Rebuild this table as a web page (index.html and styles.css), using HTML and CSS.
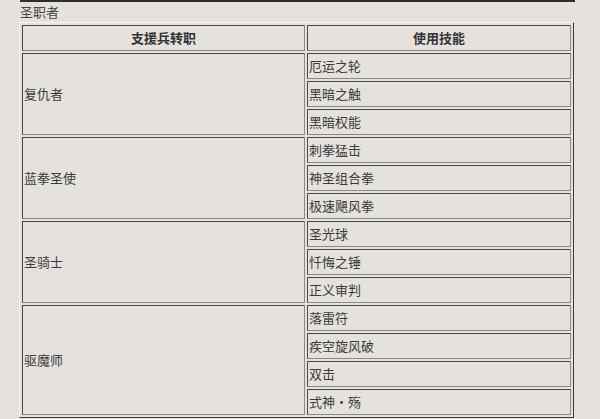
FILE: index.html
```html
<!DOCTYPE html>
<html lang="zh">
<head>
<meta charset="utf-8">
<link rel="stylesheet" href="styles.css">
</head>
<body>
<div class="page">
  <div class="topline"></div>
  <div class="title">圣职者</div>
  <table class="grid">
    <tr class="head"><th class="c1">支援兵转职</th><th class="c2">使用技能</th></tr>
    <tr><td rowspan="3">复仇者</td><td>厄运之轮</td></tr>
    <tr><td>黑暗之触</td></tr>
    <tr><td>黑暗权能</td></tr>
    <tr><td rowspan="3">蓝拳圣使</td><td>刺拳猛击</td></tr>
    <tr><td>神圣组合拳</td></tr>
    <tr><td>极速飓风拳</td></tr>
    <tr><td rowspan="3">圣骑士</td><td>圣光球</td></tr>
    <tr><td>忏悔之锤</td></tr>
    <tr><td>正义审判</td></tr>
    <tr><td rowspan="4">驱魔师</td><td>落雷符</td></tr>
    <tr><td>疾空旋风破</td></tr>
    <tr><td>双击</td></tr>
    <tr><td>式神・殇</td></tr>
  </table>
</div>
</body>
</html>
```

FILE: styles.css
```css
html, body {
  margin: 0;
  padding: 0;
  background: #e5e2de;
}
body {
  font-family: "Noto Sans CJK SC", "DejaVu Sans", sans-serif;
  font-size: 13px;
  color: #3a3a3a;
}
.page {
  padding-left: 19px;
}
.topline {
  margin-left: 1px;
  width: 555px;
  height: 2px;
  background: #2e2e2e;
}
.title {
  height: 20px;
  line-height: 19px;
  padding-left: 1px;
  color: #444;
}
.grid {
  width: 555px;
  border-collapse: separate;
  border-spacing: 2px;
  border-style: solid;
  border-width: 1px;
  border-color: #f6f5f3 #3a3a3a #3a3a3a #f6f5f3;
}
.grid th, .grid td {
  height: 24px;
  padding: 0 1px;
  border-style: solid;
  border-width: 1px;
  border-color: #4a4a4a #8a8a8a #8a8a8a #4a4a4a;
  text-align: left;
  font-weight: normal;
  line-height: 16px;
}
.grid th {
  text-align: center;
  font-weight: bold;
  color: #333;
}
.grid .c1 {
  width: 279px;
}
```
